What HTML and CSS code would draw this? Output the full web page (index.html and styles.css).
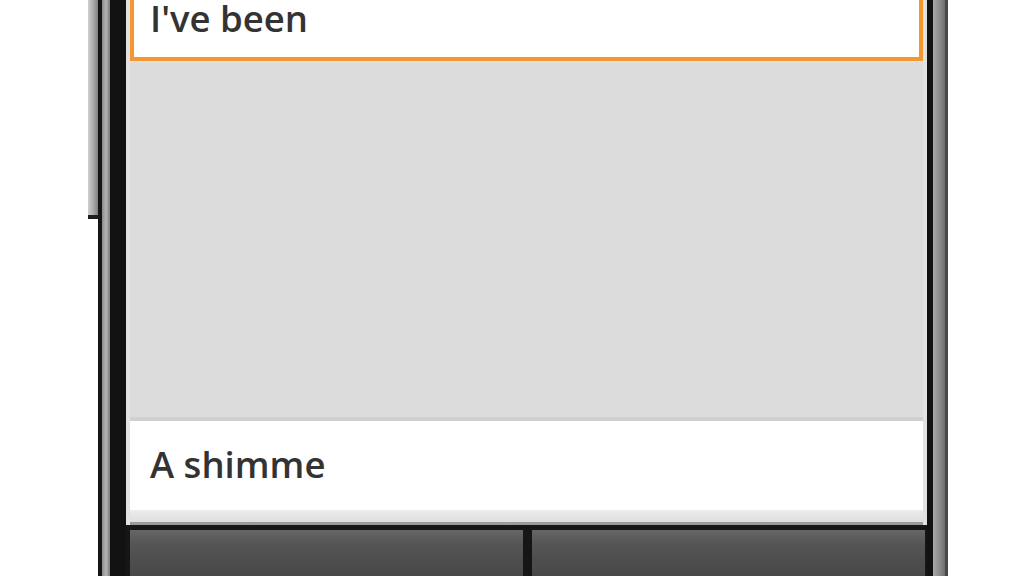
FILE: index.html
```html
<!DOCTYPE html>
<html>
<head>
<meta charset="utf-8">
<link rel="stylesheet" href="styles.css">
</head>
<body>
<div class="stage">
  <div class="phone">
    <div class="side-button"></div>
    <div class="bezel">
      <div class="screen">
        <div class="content">
          <div class="edit">
            <div class="edit-text">I've been</div>
          </div>
          <div class="empty"></div>
          <div class="divider"></div>
          <div class="item">
            <div class="item-text">A shimme</div>
          </div>
          <div class="item-foot"></div>
        </div>
        <div class="buttonbar">
          <div class="btn"></div>
          <div class="btn"></div>
        </div>
      </div>
    </div>
  </div>
</div>
</body>
</html>
```

FILE: styles.css
```css
html, body {
  margin: 0;
  padding: 0;
  background: #ffffff;
}
body {
  width: 1024px;
  height: 576px;
  overflow: hidden;
  font-family: "Open Sans", "Noto Sans", "DejaVu Sans", sans-serif;
}
.stage {
  display: flex;
  height: 576px;
}
.phone {
  position: relative;
  display: flex;
  margin-left: 98px;
  height: 576px;
  border-left: 4px solid #151515;
  border-right: 3px solid #474747;
  padding-left: 8px;
  padding-right: 12px;
  background: #8c8c8c;
}
.phone::before {
  content: "";
  position: absolute;
  left: 0;
  top: 0;
  width: 8px;
  height: 100%;
  background: linear-gradient(to right, #8a8a8a, #b4b4b4 50%, #7a7a7a);
}
.phone::after {
  content: "";
  position: absolute;
  right: 0;
  top: 0;
  width: 12px;
  height: 100%;
  background: linear-gradient(to right, #a8a8a8, #8e8e8e 50%, #6e6e6e);
}
.side-button {
  position: absolute;
  left: -14px;
  top: 0;
  width: 10px;
  height: 215px;
  background: linear-gradient(to right, #d0d0d0, #acacac 50%, #808080);
  border-bottom: 4px solid #1e1e1e;
}
.bezel {
  position: relative;
  z-index: 1;
  display: flex;
  padding-left: 16px;
  padding-right: 6px;
  background: #121212;
}
.screen {
  width: 801px;
  display: flex;
  flex-direction: column;
  height: 576px;
}
.content {
  flex: 1;
  display: flex;
  flex-direction: column;
  padding: 0 4px;
  background: #e2e2e2;
}
.edit {
  height: 57px;
  background: #ffffff;
  border: 4px solid #f5972f;
  border-top: none;
  padding-left: 16px;
  overflow: hidden;
  margin-bottom: 1px;
}
.edit-text,
.item-text {
  font-size: 36.5px;
  font-weight: 600;
  line-height: 38px;
  color: #333333;
  white-space: nowrap;
}
.edit-text {
  margin-top: -1px;
}
.empty {
  flex: 1;
  background: #dcdcdc;
}
.divider {
  height: 4px;
  background: #d0d0d0;
}
.item {
  height: 89px;
  background: #ffffff;
  padding-left: 20px;
  box-sizing: border-box;
  padding-top: 24px;
}
.item-foot {
  height: 12px;
  background: linear-gradient(to bottom, #ededed, #dedede);
  border-bottom: 3px solid #9a9a9a;
}
.buttonbar {
  display: flex;
  gap: 9px;
  height: 46px;
  padding: 5px 2px 0 4px;
  background: #161616;
}
.btn {
  flex: 1;
  background: linear-gradient(to bottom, #666666, #555555 30%, #474747);
}
```
